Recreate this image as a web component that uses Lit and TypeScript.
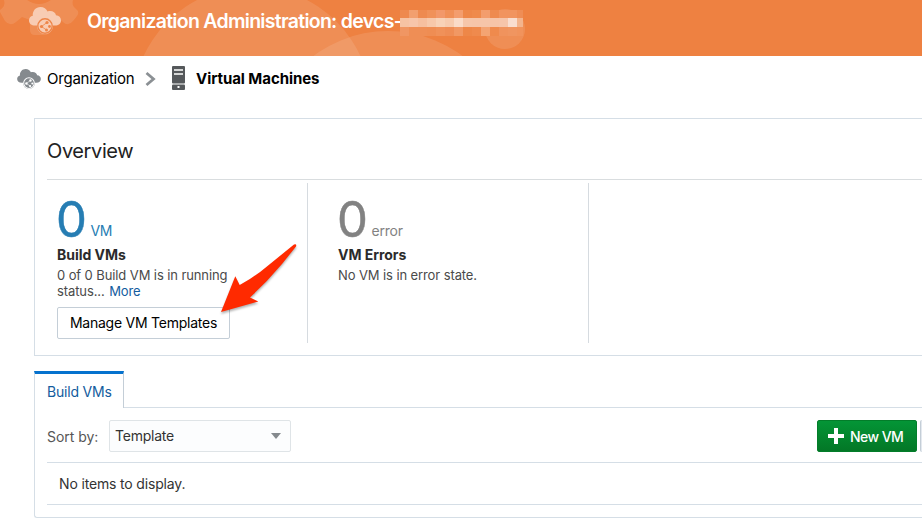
import { LitElement, html, css } from "lit";
import { customElement, property } from "lit/decorators.js";

@customElement("cloud-icon")
class CloudIcon extends LitElement {
  static styles = css`
    :host { display: block; }
    svg { display: block; width: 100%; height: 100%; }
    .fill { fill: var(--cloud); }
    .disc { fill: var(--cloud); stroke: var(--mark); stroke-width: 1.4; }
    .line { fill: none; stroke: var(--mark); stroke-width: .8; }
    .dot { fill: var(--mark); }
  `;
  render() {
    return html`<svg viewBox="0 0 32 27">
      <path class="fill" d="M6 18.500C2.500 18.500 0 16.500 0 13.500C0 10.800 1.500 9.300 3.800 8.800C3.300 4 6.700 0 11.500 0C14.800 0 17.500 1.800 18.500 4.500C22.500 3 26.500 5 27 8.300C30 8.500 32 10.500 32 13.500C32 16.500 29.500 18.500 26 18.500Z"/>
      <circle class="fill" cx="16" cy="19" r="8"/>
      <circle class="disc" cx="16" cy="19" r="7.200"/>
      <path class="line" d="M12.500 19.500L18 15.500M12.500 19.500L17.500 23"/>
      <circle class="dot" cx="12.500" cy="19.500" r="1.600"/><circle class="dot" cx="18" cy="15.500" r="1.600"/>
      <circle class="dot" cx="17.500" cy="23" r="1.500"/><circle class="dot" cx="20.500" cy="19.500" r="1.400"/>
    </svg>`;
  }
}

const MASK = [
  ["#ee894f", "#f29f6f", "#ee8a50", "#f09159", "#f2986a", "#f09058", "#f39d6e", "#ee8749", "#ef8a4c", "#f39d6d", "#ee8a4f", "#f1945f", "#f1945f", "#ef8d55"],
  ["#f6c3a4", "#f7c5aa", "#f6bf9f", "#f7c8aa", "#f8d2b7", "#f7cbae", "#fadbc8", "#f6c6aa", "#f6c5a9", "#f6c5a9", "#f6c4a8", "#f6c5aa", "#f9ded0", "#f3b48d"],
  ["#f09663", "#ef8e55", "#ef8e55", "#ef8d53", "#f09159", "#ef8d55", "#f19864", "#ee8748", "#ef8a4d", "#f4a473", "#ef8a4d", "#f0935d", "#f09560", "#f1935c"],
];

@customElement("stat-tile")
class StatTile extends LitElement {
  @property() unit = "";
  @property() heading = "";
  static styles = css`
    :host { box-sizing: border-box; display: block; width: 281px; height: 160px; border-right: 1px solid #d6dbe0; }
    .figure { display: flex; align-items: baseline; height: 65px; color: var(--tone); }
    .zero { font-size: 49px; line-height: 72px; width: 33.500px; margin-left: -1px; -webkit-text-stroke: .5px; position: relative; top: 1px; }
    .unit { font-size: 14px; margin-left: 1px; letter-spacing: var(--unit-spacing, -.4px); }
    .heading { font-size: 14px; font-weight: 700; line-height: 17px; color: #2b2b2b; letter-spacing: -.04px; height: 19px; margin-top: -2px; }
    .body { font-size: 13px; line-height: 16px; color: #4a4a4a; margin-top: 2px; letter-spacing: -.1px; }
  `;
  render() {
    return html`<div class="figure"><span class="zero">0</span><span class="unit">${this.unit}</span></div>
      <div class="heading">${this.heading}</div>
      <div class="body"><slot></slot></div>`;
  }
}

@customElement("app-root")
class AppRoot extends LitElement {
  static styles = css`
    :host { display: block; position: relative; width: 922px; height: 523px; overflow: hidden; background: #fff; color: #000; font-family: Inter, "Liberation Sans", sans-serif; white-space: nowrap; }
    * { box-sizing: border-box; }
    header { position: relative; display: flex; height: 56px; background: #ee8141; }
    .backdrop { position: absolute; inset: 0; }
    .backdrop .shape { fill: #fff; fill-opacity: .11; }
    .brand { position: relative; width: 32px; height: 27px; margin: 7px 0 0 29px; --cloud: #f8ccb3; --mark: #ee8548; }
    .title { position: relative; margin: 10px 0 0 26px; font-size: 19.500px; line-height: 23px; font-weight: 600; color: #fff; letter-spacing: -.72px; width: 313px; }
    .mask { position: relative; display: grid; grid-template-columns: repeat(13, 9px) 6px; grid-template-rows: 8px 9px 9px; height: 26px; margin-top: 10px; }
    .crumbs { display: flex; align-items: center; height: 45px; font-size: 15px; }
    .crumb-cloud { width: 24px; height: 20px; margin-left: 17px; --cloud: #858a8e; --mark: #fff; }
    .crumb { margin-left: 6px; width: 87px; letter-spacing: -.22px; }
    .chev { margin-left: 11px; }
    .server { margin: -2px 0 0 16px; }
    .current { margin-left: 11px; font-weight: 700; letter-spacing: -.06px; }
    .overview { margin: 17px 0 0 34px; height: 238px; border: 1px solid #d5dee6; border-right: 0; padding: 17px 0 0 12px; }
    h2 { font-size: 20px; line-height: 30px; font-weight: 400; margin: 0; color: #222; height: 43px; letter-spacing: -.4px; }
    .tiles { display: flex; border-top: 1px solid #d9dddf; padding-top: 3px; }
    .tiles stat-tile { padding-left: 30px; }
    .tiles .first { width: 261px; padding-left: 10px; --tone: #267db3; }
    .tiles .second { --tone: #828282; --unit-spacing: -.2px; }
    .link { color: #145c9e; margin-left: 1px; }
    .manage { display: flex; align-items: center; justify-content: center; width: 173px; height: 32px; margin-top: 8px; border: 1px solid #c4ced7; border-radius: 2px; font-size: 14px; color: #000; background: #fff; letter-spacing: -.24px; }
    .tabs { display: flex; margin: 15px 0 0 34px; height: 37px; }
    .tab { width: 90px; border-top: 3px solid #0572ce; border-left: 1px solid #d5dee6; border-right: 1px solid #c4ced7; padding-left: 12px; font-size: 14px; line-height: 36px; color: #145c9e; letter-spacing: -.2px; }
    .rest { flex: 1; border-bottom: 1px solid #d5dee6; }
    .panel { margin-left: 34px; height: 110px; border: 1px solid #d5dee6; border-width: 0 0 1px 1px; border-radius: 0 0 0 3px; padding: 12px 0 0 12px; }
    .bar { display: flex; height: 42px; }
    .sort { width: 62px; font-size: 14px; line-height: 33px; color: #565656; letter-spacing: -.05px; }
    .select { display: flex; align-items: center; justify-content: space-between; width: 182px; height: 32px; padding: 0 9px 0 5px; border: 1px solid #dfe4e7; border-radius: 2px; background: #fcfdfe; color: #333; font-size: 14px; letter-spacing: -.24px; }
    .select span { padding-bottom: 2px; }
    .grow { flex: 1; }
    .new { display: flex; align-items: center; width: 100px; height: 32px; padding-left: 10px; gap: 6px; border-radius: 2px; background: linear-gradient(#049536, #037726); border: 1px solid #037d2a; color: #fff; font-size: 14px; font-weight: 500; letter-spacing: -.55px; }
    .sliver { width: 2px; height: 32px; margin-left: 3px; background: #e4e9ef; border-left: 1px solid #c4ced7; border-radius: 2px 0 0 2px; }
    .empty { height: 43px; border: 1px solid #d5dee6; border-width: 1px 0; padding-left: 12px; font-size: 14px; line-height: 42px; color: #333; letter-spacing: -.16px; }
    .arrow { position: absolute; left: 215px; top: 236px; filter: drop-shadow(0 2px 1px rgba(0,0,0,.3)); }
  `;
  render() {
    return html`
      <header>
        <svg class="backdrop" width="922" height="56">
          <circle class="shape" cx="252" cy="106" r="119.400"/>
          <circle class="shape" cx="388" cy="154.500" r="123.500"/>
          <circle class="shape" cx="505" cy="29" r="20"/>
          <path class="shape" d="M0 12L5 21Q10 27 16 22L22 17L30 20V30Q30 35 35 35H44Q50 35 50 29V20L57 17L63 22Q68 27 73 21L77 16Q80 12 76 9Q71 5 73 0H51Q39 8 27 0H4Q6 6 0 10Z"/>
        </svg>
        <cloud-icon class="brand"></cloud-icon>
        <div class="title">Organization Administration: devcs-</div>
        <div class="mask">${MASK.flat().map((c) => html`<span style="background:${c}"></span>`)}</div>
      </header>
      <nav class="crumbs">
        <cloud-icon class="crumb-cloud"></cloud-icon>
        <span class="crumb">Organization</span>
        <svg class="chev" width="11" height="16"><path d="M1.500 2L8.500 8L1.500 14" fill="none" stroke="#8b9094" stroke-width="2.800"/></svg>
        <svg class="server" width="13" height="24"><rect width="13" height="17.500" rx="1" fill="#55585b"/><path d="M2 4H11M2 8H11" stroke="#fff" stroke-width="1.400"/><rect y="18.500" width="13" height="5.500" rx="1" fill="#55585b"/><rect x="5.500" y="20" width="2" height="2" fill="#fff"/></svg>
        <span class="current">Virtual Machines</span>
      </nav>
      <section class="overview">
        <h2>Overview</h2>
        <div class="tiles">
          <stat-tile class="first" unit="VM" heading="Build VMs">0 of 0 Build VM is in running<br>status... <span class="link">More</span>
            <div class="manage">Manage VM Templates</div></stat-tile>
          <stat-tile class="second" unit="error" heading="VM Errors">No VM is in error state.</stat-tile>
        </div>
      </section>
      <div class="tabs"><div class="tab">Build VMs</div><div class="rest"></div></div>
      <section class="panel">
        <div class="bar">
          <span class="sort">Sort by:</span>
          <div class="select"><span>Template</span><svg width="10" height="6"><path d="M0 0H10L5 6Z" fill="#858a8e"/></svg></div>
          <span class="grow"></span>
          <div class="new"><svg width="16" height="16"><path d="M8 0V16M0 8H16" stroke="#fff" stroke-width="4"/></svg><span>New VM</span></div>
          <span class="sliver"></span>
        </div>
        <div class="empty">No items to display.</div>
      </section>
      <svg class="arrow" width="90" height="85"><path d="M79 8.500Q82 7.500 81 10.500L67 28Q52 46 35 61.500L43.300 65.500L6 76L20.300 40.300L24.700 49Q40 41 55 28Z" fill="#ff2a00"/></svg>
    `;
  }
}
